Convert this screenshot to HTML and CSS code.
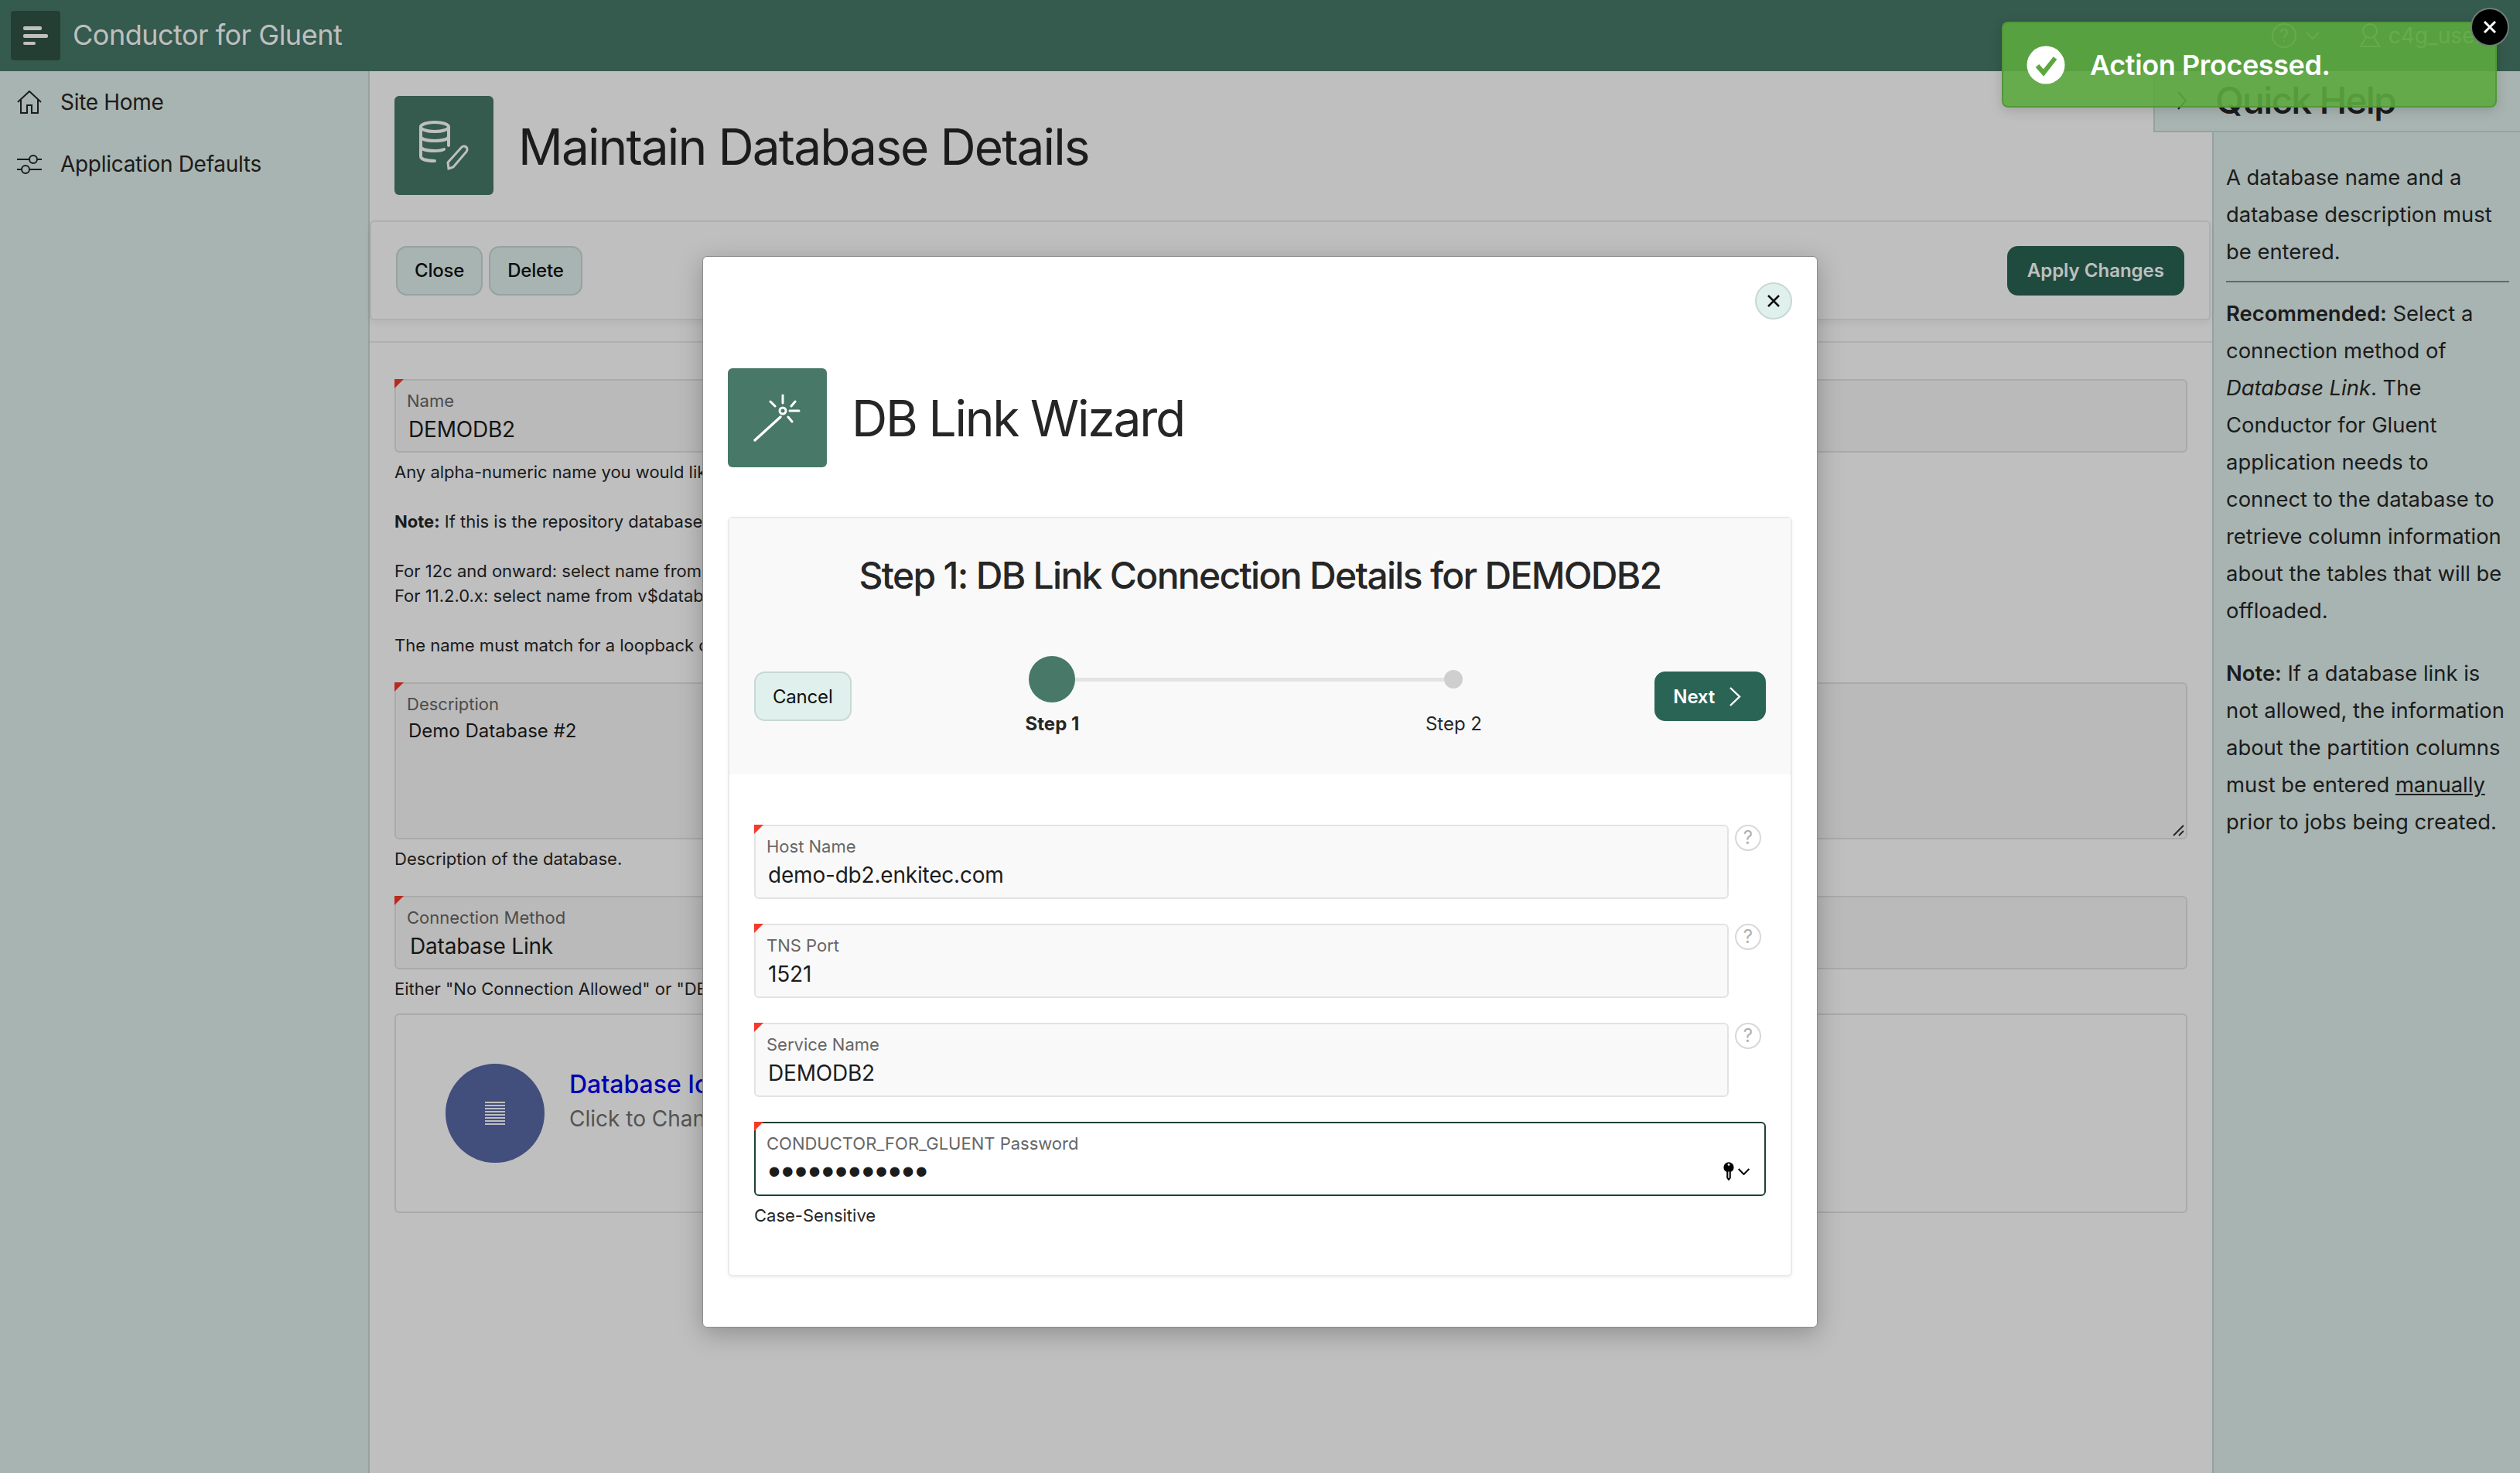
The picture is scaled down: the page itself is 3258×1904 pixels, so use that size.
FILE: index.html
```html
<!DOCTYPE html>
<html lang="en">
<head>
    <meta charset="UTF-8">
    <title>Maintain Database Details</title>
    <link rel="stylesheet" href="styles.css">
</head>
<body>
    <header class="topbar">
        <div class="menu-btn">
            <svg width="32" height="24" viewBox="0 0 32 24"><rect x="0" y="0" width="24" height="5" rx="2" fill="#fff"/><rect x="0" y="10" width="32" height="5" rx="2" fill="#fff"/><rect x="0" y="20" width="16" height="4" rx="2" fill="#fff"/></svg>
        </div>
        <div class="app-name">Conductor for Gluent</div>
        <div class="user-nav">
            <svg width="34" height="34" viewBox="0 0 34 34" fill="none" stroke="#fff" stroke-width="2"><circle cx="17" cy="17" r="15"/><path d="M13 13c0-5 8-5 8 0 0 3-4 3-4 7M17 23v2"/></svg>
            <svg width="20" height="12" viewBox="0 0 20 12" fill="none" stroke="#fff" stroke-width="2"><path d="M2 2l8 8 8-8"/></svg>
            <svg class="user-icon" width="28" height="34" viewBox="0 0 28 34" fill="none" stroke="#fff" stroke-width="2"><circle cx="14" cy="11" r="9"/><path d="M9 19L2 31h24l-7-12"/></svg>
            <span>c4g_user</span>
        </div>
    </header>

    <div class="main">
        <nav class="sidebar">
            <a class="nav-item">
                <svg width="32" height="30" viewBox="0 0 32 30" fill="none" stroke="#262626" stroke-width="2"><path d="M1 15L16 1l15 14M5 12v17h8V19h6v10h8V12"/></svg>
                Site Home
            </a>
            <a class="nav-item">
                <svg width="32" height="26" viewBox="0 0 32 26" fill="none" stroke="#262626" stroke-width="2"><path d="M0 7h16M26 7h6M0 20h6M16 20h16"/><circle cx="21" cy="7" r="5"/><circle cx="11" cy="20" r="5"/></svg>
                Application Defaults
            </a>
        </nav>

        <section class="content">
            <div class="page-head">
                <div class="head-icon">
                    <svg width="64" height="64" viewBox="0 0 64 64" fill="none" stroke="#fff" stroke-width="4" stroke-linecap="round"><ellipse cx="20" cy="8" rx="18" ry="6"/><path d="M2 8v38c0 4 8 6 18 6M38 8v24M2 20c0 4 8 6 18 6s18-2 18-6M2 33c0 4 8 6 18 6 4 0 8 0 12-2"/><path d="M38 62l-1-8 18-20c2-2 7-1 7 3 0 1 0 2-1 3L44 60z" stroke-width="3"/></svg>
                </div>
                <h1 class="page-title">Maintain Database Details</h1>
            </div>

            <div class="toolbar">
                <button class="btn">Close</button>
                <button class="btn">Delete</button>
                <button class="btn btn-hot btn-right">Apply Changes</button>
            </div>

            <div class="form-area">
                <div class="field">
                    <label>Name</label>
                    <div class="value">DEMODB2</div>
                </div>
                <p class="help-text">Any alpha-numeric name you would like to use for this database.<br><br><b>Note:</b> If this is the repository database, the name must match the database name.<br><br>For 12c and onward: select name from v$pdbs<br>For 11.2.0.x: select name from v$database<br><br>The name must match for a loopback connection.</p>

                <div class="field field-tall">
                    <label>Description</label>
                    <div class="value">Demo Database #2</div>
                    <svg class="resizer" width="16" height="16" viewBox="0 0 16 16" stroke="#333" stroke-width="2"><path d="M2 15L15 2M9 15l6-6"/></svg>
                </div>
                <p class="help-text">Description of the database.</p>

                <div class="field">
                    <label>Connection Method</label>
                    <div class="value value-select">Database Link</div>
                </div>
                <p class="help-text">Either "No Connection Allowed" or "DB Link".</p>

                <div class="icon-box">
                    <div class="db-circle">
                        <svg width="26" height="30" viewBox="0 0 26 30" fill="#fff"><rect y="0" width="26" height="2"/><rect y="4" width="26" height="2"/><rect y="8" width="26" height="2"/><rect y="12" width="26" height="2"/><rect y="16" width="26" height="2"/><rect y="20" width="26" height="2"/><rect y="24" width="26" height="2"/><rect y="28" width="26" height="2"/></svg>
                    </div>
                    <div class="icon-text">
                        <a class="icon-link">Database Icon</a>
                        <div class="icon-sub">Click to Change</div>
                    </div>
                </div>
            </div>
        </section>

        <aside class="quick-help">
            <div class="qh-tab">
                <svg width="14" height="26" viewBox="0 0 14 26" fill="none" stroke="#262626" stroke-width="2"><path d="M2 2l10 11L2 24"/></svg>
                <span>Quick Help</span>
            </div>
            <p>A database name and a database description must be entered.</p>
            <hr>
            <p><b>Recommended:</b> Select a connection method of <i>Database Link</i>. The Conductor for Gluent application needs to connect to the database to retrieve column information about the tables that will be offloaded.</p>
            <p><b>Note:</b> If a database link is not allowed, the information about the partition columns must be entered <u>manually</u> prior to jobs being created.</p>
        </aside>
    </div>

    <div class="overlay"></div>

    <div class="modal">
        <div class="modal-top">
            <button class="modal-close">
                <svg width="18" height="18" viewBox="0 0 18 18" stroke="#111" stroke-width="2.6"><path d="M2 2l14 14M16 2L2 16"/></svg>
            </button>
        </div>
        <div class="modal-head">
            <div class="wizard-icon">
                <svg width="62" height="62" viewBox="0 0 62 62" fill="none" stroke="#fff" stroke-width="3" stroke-linecap="round"><path d="M2 60l33-30" stroke-width="3.4"/><circle cx="38" cy="22" r="4"/><path d="M38 2v10M22 10l6 6M54 10l-5 6M47 22h12M50 36l-5-6"/></svg>
            </div>
            <h2 class="modal-title">DB Link Wizard</h2>
        </div>

        <div class="region">
            <div class="region-head">
                <h3 class="step-title">Step 1: DB Link Connection Details for DEMODB2</h3>
                <div class="wizard-row">
                    <button class="btn btn-light">Cancel</button>
                    <div class="steps">
                        <div class="step step-active">
                            <div class="dot-wrap"><span class="dot"></span></div>
                            <div class="step-label">Step 1</div>
                        </div>
                        <div class="step">
                            <div class="dot-wrap"><span class="dot"></span></div>
                            <div class="step-label">Step 2</div>
                        </div>
                    </div>
                    <button class="btn btn-next">Next
                        <svg width="16" height="27" viewBox="0 0 16 27" fill="none" stroke="#fff" stroke-width="2.4"><path d="M2 2l12 11.5L2 25"/></svg>
                    </button>
                </div>
            </div>

            <div class="region-body">
                <div class="form-row">
                    <div class="field">
                        <label>Host Name</label>
                        <div class="value">demo-db2.enkitec.com</div>
                    </div>
                    <span class="help-btn">?</span>
                </div>
                <div class="form-row">
                    <div class="field">
                        <label>TNS Port</label>
                        <div class="value">1521</div>
                    </div>
                    <span class="help-btn">?</span>
                </div>
                <div class="form-row">
                    <div class="field">
                        <label>Service Name</label>
                        <div class="value">DEMODB2</div>
                    </div>
                    <span class="help-btn">?</span>
                </div>
                <div class="form-row form-row-last">
                    <div class="field field-focus">
                        <label>CONDUCTOR_FOR_GLUENT Password</label>
                        <div class="value value-pass">••••••••••••</div>
                        <div class="pass-icons">
                            <svg width="14" height="25" viewBox="0 0 20 36"><circle cx="10" cy="10" r="9.5" fill="#000"/><circle cx="10" cy="5" r="2" fill="#fff"/><path d="M6 16h8v14l-4 5-4-5z" fill="#000"/><path d="M9 18h2v12H9z" fill="#fff"/></svg>
                            <svg width="15" height="9" viewBox="0 0 22 13" fill="none" stroke="#000" stroke-width="3"><path d="M1 1.5l10 10 10-10"/></svg>
                        </div>
                    </div>
                </div>
                <div class="case-note">Case-Sensitive</div>
            </div>
        </div>
    </div>

    <div class="toast">
        <svg width="50" height="50" viewBox="0 0 50 50"><circle cx="25" cy="25" r="24.5" fill="#fff"/><path d="M14 26l8 9 15-19" fill="none" stroke="#5ca83f" stroke-width="6"/></svg>
        <span>Action Processed.</span>
        <button class="toast-close">
            <svg width="20" height="20" viewBox="0 0 20 20" stroke="#fff" stroke-width="3"><path d="M3 3l14 14M17 3L3 17"/></svg>
        </button>
    </div>
</body>
</html>
```

FILE: styles.css
```css
* {
    box-sizing: border-box;
}

body {
    font-family: Inter, "Liberation Sans", sans-serif;
    color: #262626;
    background-color: #fff;
    margin: 0;
    height: 1904px;
    overflow: hidden;
    position: relative;
    display: flex;
    flex-direction: column;
}

h1, h2, h3, p {
    margin: 0;
    font-weight: 400;
}

button {
    font-family: inherit;
}

.topbar {
    height: 92px;
    flex: none;
    background-color: #477868;
    color: #fff;
    display: flex;
    align-items: center;
    padding: 0 14px;
}

.menu-btn {
    width: 64px;
    height: 64px;
    border-radius: 4px;
    background-color: #315346;
    display: flex;
    align-items: center;
    justify-content: center;
}

.app-name {
    font-size: 36px;
    letter-spacing: -0.5px;
    margin-left: 16px;
    margin-bottom: 3px;
}

.user-nav {
    margin-left: auto;
    display: flex;
    align-items: center;
    gap: 10px;
    font-size: 28px;
    padding-right: 34px;
}

.user-icon {
    margin-left: 40px;
}

.main {
    flex: 1;
    display: flex;
    min-height: 0;
}

.sidebar {
    width: 478px;
    flex: none;
    background-color: #e0f0ec;
    border-right: 2px solid #c8d8d4;
}

.nav-item {
    height: 80px;
    display: flex;
    align-items: center;
    gap: 24px;
    padding-left: 22px;
    font-size: 28px;
    letter-spacing: -0.3px;
}

.content {
    flex: 1;
    min-width: 0;
    border-right: 2px solid #c8d8d4;
}

.page-head {
    height: 193px;
    padding: 32px 0 0 32px;
    display: flex;
    align-items: flex-start;
    gap: 32px;
}

.head-icon {
    width: 128px;
    height: 128px;
    border-radius: 6px;
    background-color: #477868;
    display: flex;
    align-items: center;
    justify-content: center;
}

.page-title {
    font-size: 64px;
    line-height: 132px;
    letter-spacing: -1.9px;
}

.toolbar {
    height: 129px;
    margin-right: 2px;
    padding: 0 32px;
    background-color: #fff;
    border: 2px solid #eaeaea;
    border-radius: 6px;
    box-shadow: 0 4px 8px rgba(0, 0, 0, 0.06);
    display: flex;
    align-items: center;
    gap: 8px;
}

.btn {
    height: 64px;
    padding: 0 22px;
    font-size: 24px;
    font-weight: 500;
    letter-spacing: -0.2px;
    color: #111;
    background-color: #e0f0ec;
    border: 2px solid #c8d8d4;
    border-radius: 14px;
}

.btn-hot {
    background-color: #2a6455;
    border-color: #2a6455;
    color: #fff;
    font-weight: 600;
    letter-spacing: 0;
    padding: 0 24px;
}

.btn-right {
    margin-left: auto;
}

.form-area {
    margin-top: 27px;
    border-top: 2px solid #eaeaea;
    padding: 47px 32px 0;
}

.field {
    position: relative;
    height: 95px;
    flex: 1;
    background-color: #f9f9f9;
    border: 2px solid #e3e3e3;
    border-radius: 6px;
    padding: 12px 16px 0;
}

.field::before {
    content: "";
    position: absolute;
    left: -2px;
    top: -2px;
    width: 12px;
    height: 12px;
    background-color: #f53a2a;
    clip-path: polygon(0 0, 100% 0, 0 100%);
}

.field label {
    display: block;
    font-size: 22px;
    line-height: 28px;
    color: #666;
    margin-left: -2px;
}

.value {
    font-size: 28px;
    line-height: 46px;
    letter-spacing: -0.2px;
    color: #1c1c1c;
}

.value-select {
    padding-left: 2px;
}

.field-tall {
    height: 203px;
}

.field-tall .value {
    font-size: 24px;
    line-height: 42px;
    letter-spacing: 0;
}

.resizer {
    position: absolute;
    right: 2px;
    bottom: 2px;
}

.help-text {
    font-size: 22px;
    line-height: 32px;
    margin-top: 9px;
    margin-bottom: 32px;
}

.icon-box {
    height: 258px;
    margin-top: -16px;
    background-color: #fff;
    border: 2px solid #e3e3e3;
    border-radius: 6px;
    padding-left: 64px;
    display: flex;
    align-items: center;
    gap: 32px;
}

.db-circle {
    width: 128px;
    height: 128px;
    border-radius: 50%;
    background-color: #5969a6;
    display: flex;
    align-items: center;
    justify-content: center;
}

.icon-text {
    margin-bottom: 30px;
}

.icon-link {
    display: block;
    color: #0000ee;
    font-size: 32px;
    font-weight: 500;
    line-height: 44px;
}

.icon-sub {
    color: #707070;
    font-size: 28px;
    line-height: 44px;
}

.quick-help {
    width: 396px;
    flex: none;
    background-color: #e0f0ec;
    position: relative;
    padding: 113px 14px 0 16px;
    font-size: 27.4px;
    line-height: 48px;
}

.quick-help b {
    font-weight: 600;
}

.quick-help p {
    margin-bottom: 33px;
}

.quick-help hr {
    border: none;
    border-top: 2px solid #8a8a8a;
    margin: -19px 0 16px;
}

.qh-tab {
    position: absolute;
    left: -78px;
    top: 0;
    right: 0;
    height: 79px;
    background-color: #e0f0ec;
    border-left: 2px solid #c8d8d4;
    border-bottom: 2px solid #c8d8d4;
    display: flex;
    align-items: center;
    gap: 36px;
    padding-left: 28px;
    padding-bottom: 2px;
    font-size: 48px;
    font-weight: 500;
    letter-spacing: -1.8px;
}

.overlay {
    position: absolute;
    inset: 0;
    background-color: rgba(0, 0, 0, 0.25);
}

.modal {
    position: absolute;
    left: 908px;
    top: 331px;
    width: 1442px;
    height: 1385px;
    background-color: #fff;
    border: 1px solid #8c8c8c;
    border-radius: 6px;
    box-shadow: 0 8px 32px rgba(0, 0, 0, 0.25);
    padding: 33px 32px 0;
}

.modal-top {
    display: flex;
    justify-content: flex-end;
    height: 111px;
}

.modal-close {
    width: 48px;
    height: 48px;
    padding: 0;
    border-radius: 50%;
    border: 2px solid #c8d8d4;
    background-color: #e0f0ec;
    display: flex;
    align-items: center;
    justify-content: center;
}

.modal-head {
    display: flex;
    align-items: center;
    gap: 32px;
    height: 128px;
}

.wizard-icon {
    width: 128px;
    height: 128px;
    border-radius: 6px;
    background-color: #477868;
    display: flex;
    align-items: center;
    justify-content: center;
}

.modal-title {
    font-size: 64px;
    letter-spacing: -2.2px;
}

.region {
    margin-top: 64px;
    height: 982px;
    border: 2px solid #eaeaea;
    border-radius: 6px;
    box-shadow: 0 2px 4px rgba(0, 0, 0, 0.05);
}

.region-head {
    height: 331px;
    background-color: #f9f9f9;
    padding: 42px 32px 0;
}

.step-title {
    font-size: 48px;
    line-height: 64px;
    text-align: center;
    font-weight: 500;
    letter-spacing: -1.7px;
}

.wizard-row {
    margin-top: 72px;
    display: flex;
    justify-content: space-between;
    align-items: flex-start;
}

.btn-light {
    margin-top: 20px;
    font-weight: 400;
}

.btn-next {
    margin-top: 20px;
    padding: 0 30px 0 22px;
    background-color: #2a6455;
    border-color: #2a6455;
    color: #fff;
    font-weight: 600;
    display: flex;
    align-items: center;
    gap: 18px;
}

.steps {
    display: flex;
    gap: 319px;
    position: relative;
}

.steps::before {
    content: "";
    position: absolute;
    left: 100px;
    right: 100px;
    top: 28px;
    height: 5px;
    background-color: #e3e3e3;
}

.step {
    width: 200px;
    text-align: center;
    position: relative;
}

.dot-wrap {
    height: 60px;
    display: flex;
    align-items: center;
    justify-content: center;
}

.dot {
    width: 24px;
    height: 24px;
    border-radius: 50%;
    background-color: #cfcfcf;
}

.step-label {
    margin-top: 12px;
    font-size: 24px;
    line-height: 32px;
}

.step-active .dot {
    width: 60px;
    height: 60px;
    background-color: #477868;
}

.step-active .step-label {
    font-weight: 700;
}

.region-body {
    padding: 65px 32px 0;
}

.region-body .field {
    height: 96px;
}

.form-row {
    display: flex;
    align-items: flex-start;
    gap: 8px;
    margin-bottom: 32px;
}

.help-btn {
    width: 34px;
    height: 34px;
    flex: none;
    border-radius: 50%;
    border: 2px solid #d8d8d8;
    color: #b0b0b0;
    font-size: 24px;
    line-height: 30px;
    text-align: center;
    margin-right: 6px;
}

.form-row-last {
    margin-bottom: 0;
}

.field-focus {
    background-color: #fff;
    border-color: #1d4035;
}

.value-pass {
    font-family: "Liberation Sans", sans-serif;
    font-size: 46px;
    line-height: 44px;
    letter-spacing: 1.2px;
}

.pass-icons {
    position: absolute;
    right: 19px;
    bottom: 17px;
    display: flex;
    align-items: center;
    gap: 5px;
}

.case-note {
    margin-top: 9px;
    font-size: 22px;
    line-height: 32px;
}

.toast {
    position: absolute;
    left: 2588px;
    top: 28px;
    width: 640px;
    height: 111px;
    background-color: rgba(92, 168, 63, 0.9);
    border: 2px solid rgba(80, 150, 55, 0.9);
    border-radius: 8px;
    box-shadow: 0 4px 16px rgba(0, 0, 0, 0.15);
    color: #fff;
    display: flex;
    align-items: center;
    gap: 32px;
    padding-left: 30px;
    font-size: 36px;
    font-weight: 600;
    letter-spacing: -0.4px;
}

.toast-close {
    position: absolute;
    right: -18px;
    top: -20px;
    width: 50px;
    height: 50px;
    padding: 0;
    background-color: #000;
    border: 2px solid #6c7d72;
    border-radius: 50%;
    display: flex;
    align-items: center;
    justify-content: center;
}
```
